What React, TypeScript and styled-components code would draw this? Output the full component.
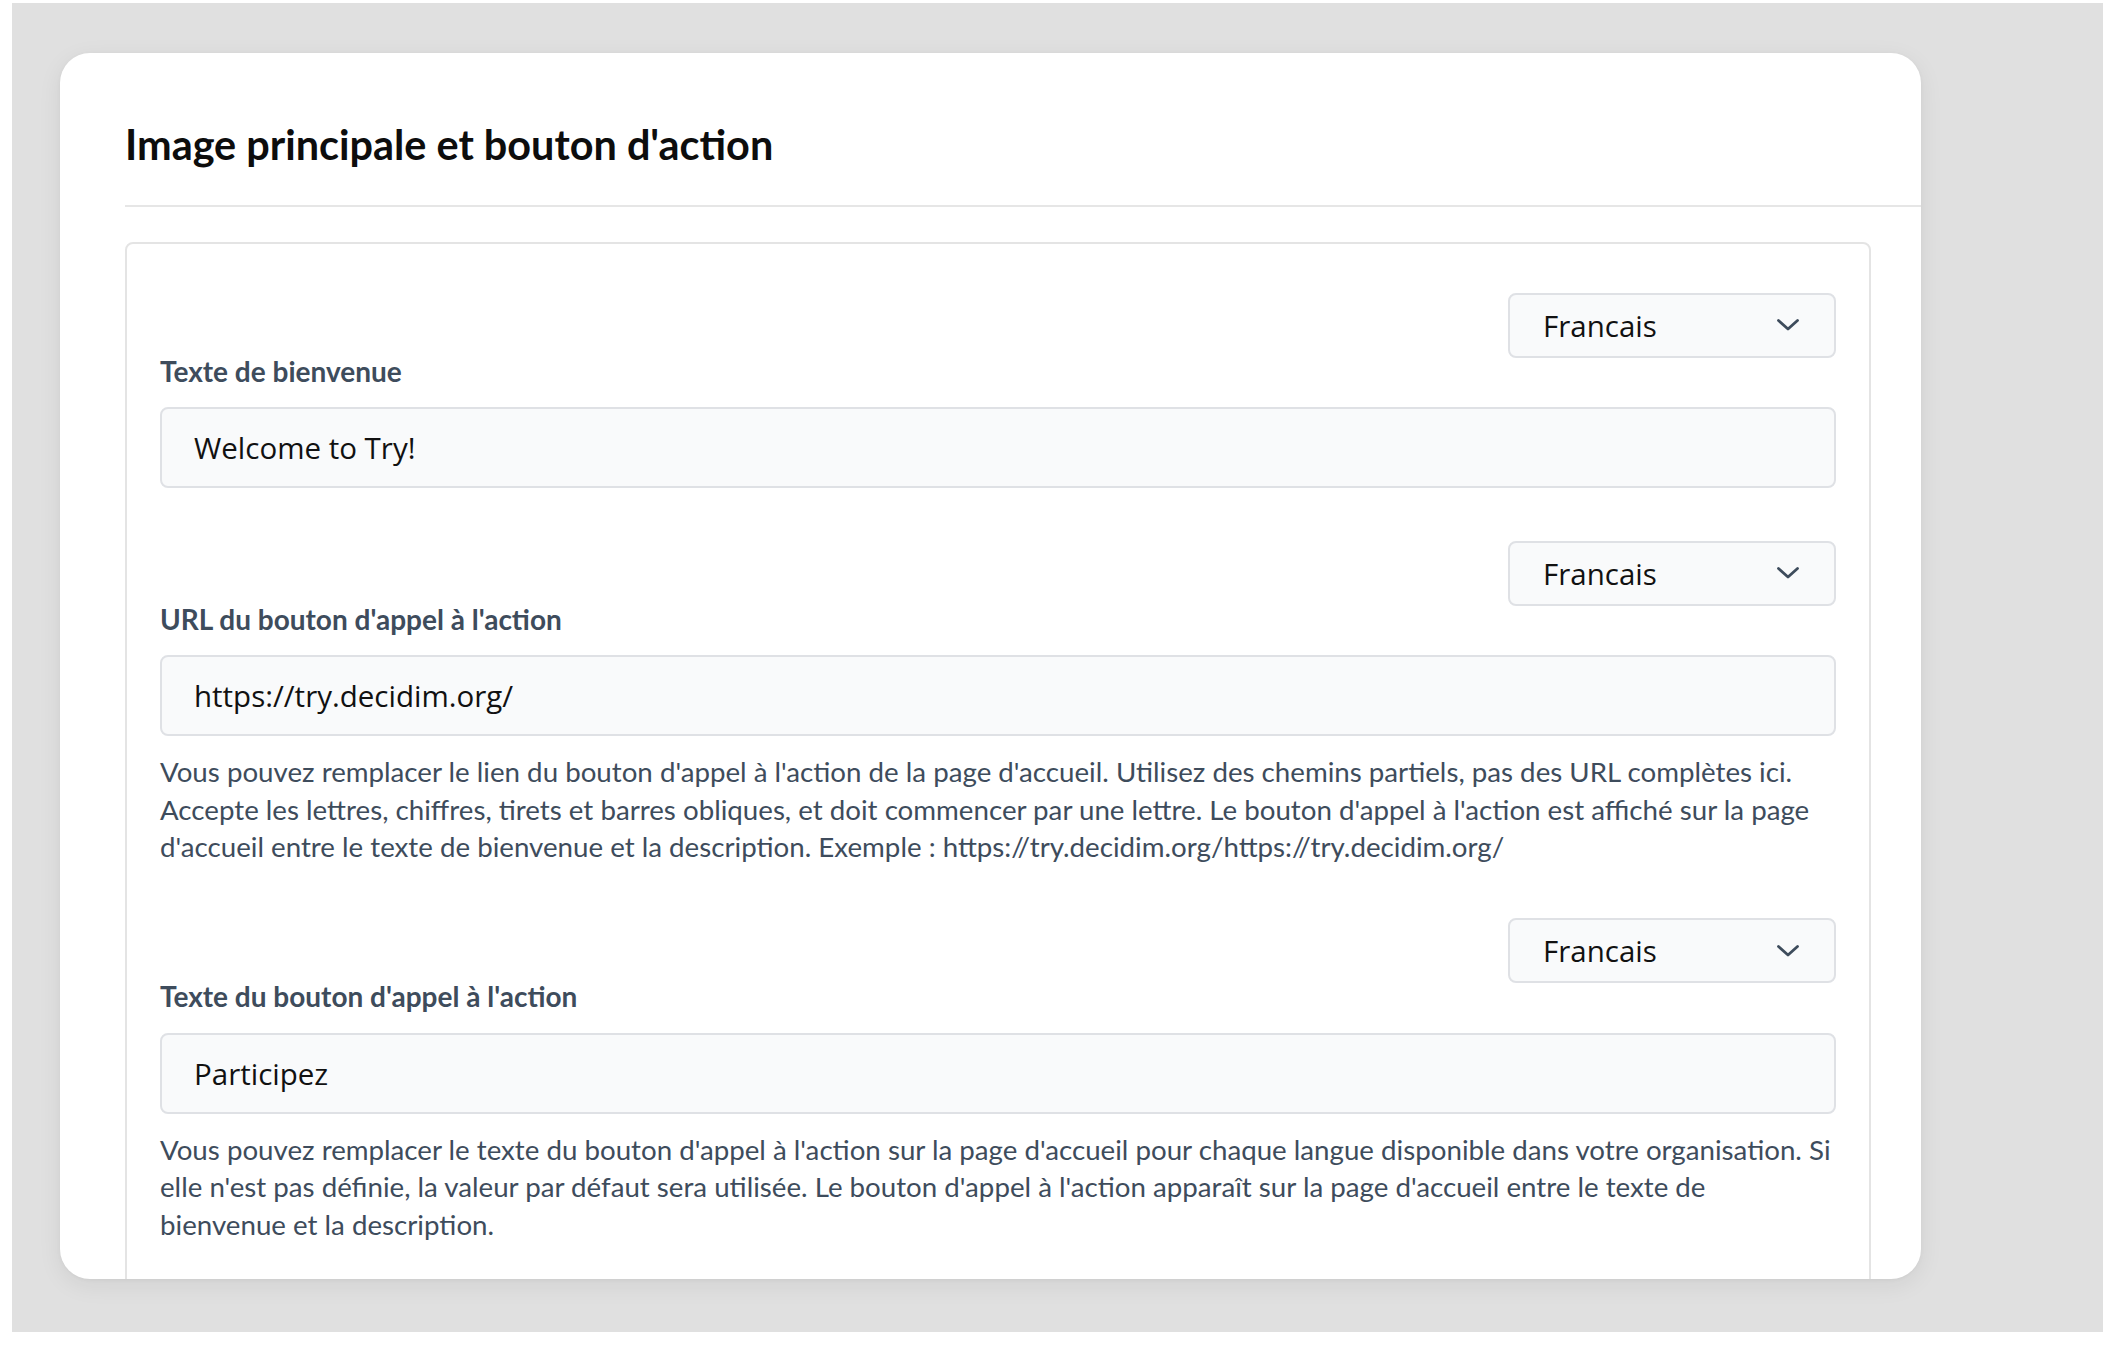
import React from 'react';
import styled, { createGlobalStyle } from 'styled-components';

const GlobalStyle = createGlobalStyle`
    html {
        background: #ffffff;
    }
    body {
        margin: 0;
        font-family: Lato, "Liberation Sans", sans-serif;
        -webkit-font-smoothing: antialiased;
    }
    * {
        box-sizing: border-box;
    }
`;

const Page = styled.div`
    margin: 3px 0 0 12px;
    height: 1329px;
    padding: 50px 0 0 48px;
    background-color: #e0e0e0;
`;

const Card = styled.section`
    width: 1861px;
    height: 1226px;
    background-color: #ffffff;
    border-radius: 30px;
    box-shadow: 0 6px 24px rgba(0, 0, 0, 0.07), 0 1px 4px rgba(0, 0, 0, 0.04);
    overflow: hidden;
`;

const CardHeader = styled.header`
    margin-left: 65px;
    padding: 67px 0 35px;
    border-bottom: 2px solid #e6e6e6;
`;

const Title = styled.h1`
    margin: 0;
    font-family: Lato, sans-serif;
    font-weight: 700;
    font-size: 41.4px;
    line-height: 1.2;
    color: #0d0d0d;
`;

const Fieldset = styled.div`
    margin: 35px 50px 0 65px;
    padding: 49px 33px 0;
    border: 2px solid #e4e4e4;
    border-radius: 8px;
    min-height: 1100px;
`;

const Field = styled.div`
    display: flex;
    flex-direction: column;
    margin-bottom: 52.5px;
`;

const LanguageRow = styled.div`
    display: flex;
    justify-content: flex-end;
`;

const LanguageSelect = styled.div`
    width: 328px;
    height: 65px;
    display: flex;
    align-items: center;
    justify-content: space-between;
    padding: 0 34px 0 33px;
    background-color: #f9fafb;
    border: 2px solid #dfe1e5;
    border-radius: 8px;
    font-family: "Open Sans", sans-serif;
    font-size: 29.5px;
    color: #111111;
`;

const Label = styled.label`
    margin: -3px 0 19px;
    font-family: Lato, sans-serif;
    font-weight: 700;
    font-size: 28px;
    line-height: 1.2;
    color: #3e4c5c;
`;

const Input = styled.div`
    height: 81px;
    display: flex;
    align-items: center;
    padding: 0 32px;
    background-color: #f9fafb;
    border: 2px solid #dfe1e5;
    border-radius: 8px;
    font-family: "Open Sans", sans-serif;
    font-size: 29.5px;
    color: #111111;
`;

const HelpText = styled.p`
    margin: 17px 0 0;
    font-family: Lato, sans-serif;
    font-size: 27.7px;
    line-height: 37.5px;
    color: #3e4c5c;
`;

const HelpLine = styled.span`
    display: block;
    white-space: nowrap;
`;

const Chevron = () => (
    <svg width="24" height="14" viewBox="0 0 24 14" fill="none">
        <path d="M2.5 2.5 L12 11 L21.5 2.5" stroke="#3e4c5c" strokeWidth="2.8" strokeLinecap="round" strokeLinejoin="round" />
    </svg>
);

interface FieldProps {
    label: string,
    value: string,
    help?: string[],
}

const TranslatedField: React.FC<FieldProps> = ({ label, value, help }) => {
    return <Field>
        <LanguageRow>
            <LanguageSelect>
                <span>Francais</span>
                <Chevron />
            </LanguageSelect>
        </LanguageRow>
        <Label>{label}</Label>
        <Input>{value}</Input>
        {help && <HelpText>
            {help.map((line) => <HelpLine key={line}>{line}</HelpLine>)}
        </HelpText>}
    </Field>
}

const fields: FieldProps[] = [
    {
        label: 'Texte de bienvenue',
        value: 'Welcome to Try!',
    },
    {
        label: "URL du bouton d'appel à l'action",
        value: 'https://try.decidim.org/',
        help: [
            "Vous pouvez remplacer le lien du bouton d'appel à l'action de la page d'accueil. Utilisez des chemins partiels, pas des URL complètes ici.",
            "Accepte les lettres, chiffres, tirets et barres obliques, et doit commencer par une lettre. Le bouton d'appel à l'action est affiché sur la page",
            "d'accueil entre le texte de bienvenue et la description. Exemple : https://try.decidim.org/https://try.decidim.org/",
        ],
    },
    {
        label: "Texte du bouton d'appel à l'action",
        value: 'Participez',
        help: [
            "Vous pouvez remplacer le texte du bouton d'appel à l'action sur la page d'accueil pour chaque langue disponible dans votre organisation. Si",
            "elle n'est pas définie, la valeur par défaut sera utilisée. Le bouton d'appel à l'action apparaît sur la page d'accueil entre le texte de",
            "bienvenue et la description.",
        ],
    },
];

export default function App() {
    return <>
        <GlobalStyle />
        <Page>
            <Card>
                <CardHeader>
                    <Title>Image principale et bouton d'action</Title>
                </CardHeader>
                <Fieldset>
                    {fields.map((field) => (
                        <TranslatedField key={field.label} {...field} />
                    ))}
                </Fieldset>
            </Card>
        </Page>
    </>
}
